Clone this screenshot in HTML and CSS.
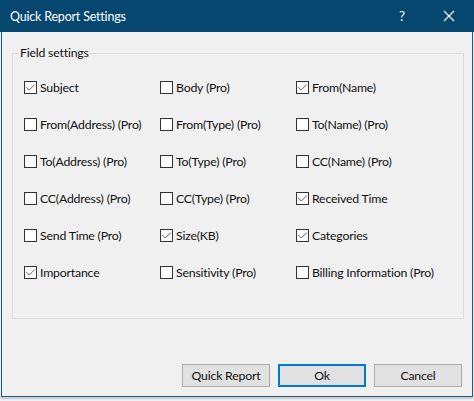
FILE: index.html
```html
<!DOCTYPE html>
<html>
<head>
<meta charset="utf-8">
<link rel="stylesheet" href="styles.css">
</head>
<body>
<div class="titlebar">
  <span class="title">Quick Report Settings</span>
  <span class="help">?</span>
  <span class="close"><svg width="12" height="12" viewBox="0 0 12 12"><path d="M1 1L11 11M11 1L1 11" stroke="#fff" stroke-width="1.2" fill="none"/></svg></span>
</div>
<div class="frame">
  <div class="group">
    <div class="legend">Field settings</div>
    <div class="grid">
      <label class="cb on"><span class="box"><svg viewBox="0 0 13 13"><path d="M1.5 6L5 9.5L11.5 3" stroke="#555" stroke-width="1.1" fill="none"/></svg></span>Subject</label>
      <label class="cb"><span class="box"></span>Body (Pro)</label>
      <label class="cb on"><span class="box"><svg viewBox="0 0 13 13"><path d="M1.5 6L5 9.5L11.5 3" stroke="#555" stroke-width="1.1" fill="none"/></svg></span>From(Name)</label>
      <label class="cb"><span class="box"></span>From(Address) (Pro)</label>
      <label class="cb"><span class="box"></span>From(Type) (Pro)</label>
      <label class="cb"><span class="box"></span>To(Name) (Pro)</label>
      <label class="cb"><span class="box"></span>To(Address) (Pro)</label>
      <label class="cb"><span class="box"></span>To(Type) (Pro)</label>
      <label class="cb"><span class="box"></span>CC(Name) (Pro)</label>
      <label class="cb"><span class="box"></span>CC(Address) (Pro)</label>
      <label class="cb"><span class="box"></span>CC(Type) (Pro)</label>
      <label class="cb on"><span class="box"><svg viewBox="0 0 13 13"><path d="M1.5 6L5 9.5L11.5 3" stroke="#555" stroke-width="1.1" fill="none"/></svg></span>Received Time</label>
      <label class="cb"><span class="box"></span>Send Time (Pro)</label>
      <label class="cb on"><span class="box"><svg viewBox="0 0 13 13"><path d="M1.5 6L5 9.5L11.5 3" stroke="#555" stroke-width="1.1" fill="none"/></svg></span>Size(KB)</label>
      <label class="cb on"><span class="box"><svg viewBox="0 0 13 13"><path d="M1.5 6L5 9.5L11.5 3" stroke="#555" stroke-width="1.1" fill="none"/></svg></span>Categories</label>
      <label class="cb on"><span class="box"><svg viewBox="0 0 13 13"><path d="M1.5 6L5 9.5L11.5 3" stroke="#555" stroke-width="1.1" fill="none"/></svg></span>Importance</label>
      <label class="cb"><span class="box"></span>Sensitivity (Pro)</label>
      <label class="cb"><span class="box"></span>Billing Information (Pro)</label>
    </div>
  </div>
  <div class="buttons">
    <button class="btn">Quick Report</button>
    <button class="btn default">Ok</button>
    <button class="btn">Cancel</button>
  </div>
</div>
</body>
</html>
```
FILE: styles.css
```css
html, body {
  margin: 0;
  padding: 0;
}
body {
  width: 474px;
  height: 401px;
  background: #f0f0f0;
  font-family: "Lato", "Noto Sans", sans-serif;
  font-size: 12.3px;
  letter-spacing: -0.2px;
  color: #111;
  overflow: hidden;
}
.titlebar {
  height: 32px;
  background: #06476f;
  color: #fff;
  display: flex;
  align-items: center;
  padding-left: 10px;
}
.title {
  flex: 1;
  font-size: 12.5px;
  letter-spacing: -0.2px;
}
.help {
  width: 14px;
  font-size: 13.5px;
  margin-right: 30px;
}
.close {
  display: flex;
  width: 12px;
  margin-right: 19px;
}
.frame {
  margin: 0 1px;
  height: 365px;
  border: 1px solid #1c5a88;
  border-top: none;
  box-shadow: 0 2px 1px #cfcfcf;
  padding: 21px 8px 0 10px;
  box-sizing: border-box;
}
.group {
  height: 266px;
  border: 1px solid #dcdcdc;
  box-sizing: border-box;
  padding: 0 0 0 11px;
}
.legend {
  display: block;
  width: fit-content;
  height: 16px;
  margin: -9px 0 0 -5px;
  padding: 0 1px;
  background: #f0f0f0;
  line-height: 16px;
}
.grid {
  display: grid;
  grid-template-columns: 136px 136px 150px;
  grid-auto-rows: 37px;
  margin-top: 18px;
}
.cb {
  display: flex;
  align-items: center;
  height: 16px;
  white-space: nowrap;
}
.box {
  width: 13px;
  height: 13px;
  border: 1px solid #333;
  box-sizing: border-box;
  background: #fff;
  margin-right: 3px;
  display: flex;
}
.box svg {
  width: 11px;
  height: 11px;
}
.buttons {
  display: flex;
  justify-content: flex-end;
  gap: 8px;
  margin-top: 45px;
  margin-right: 2px;
}
.btn {
  width: 88px;
  height: 23px;
  background: #e1e1e1;
  border: 1px solid #adadad;
  font-family: inherit;
  font-size: 12.3px;
  letter-spacing: -0.2px;
  color: #111;
  padding: 0;
}
.btn.default {
  border: 2px solid #0078d7;
}
```
